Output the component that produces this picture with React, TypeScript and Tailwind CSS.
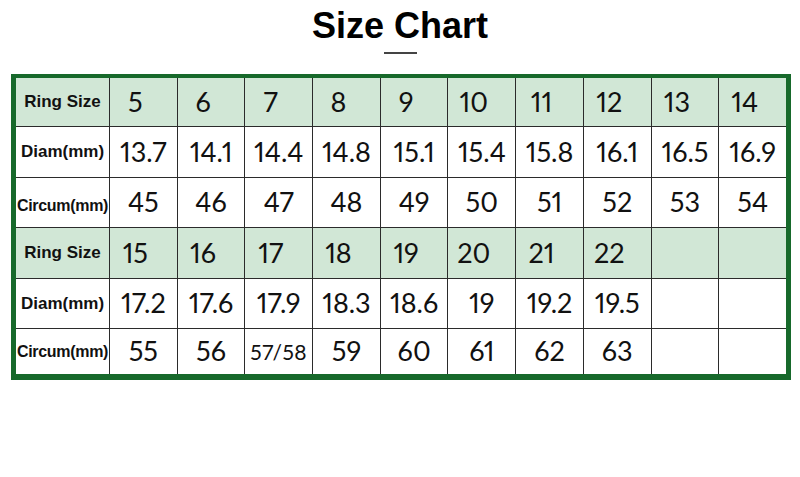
import React from "react";

const rows: { label: string; cells: string[]; head: boolean }[] = [
  { label: "Ring Size", cells: ["5", "6", "7", "8", "9", "10", "11", "12", "13", "14"], head: true },
  { label: "Diam(mm)", cells: ["13.7", "14.1", "14.4", "14.8", "15.1", "15.4", "15.8", "16.1", "16.5", "16.9"], head: false },
  { label: "Circum(mm)", cells: ["45", "46", "47", "48", "49", "50", "51", "52", "53", "54"], head: false },
  { label: "Ring Size", cells: ["15", "16", "17", "18", "19", "20", "21", "22", "", ""], head: true },
  { label: "Diam(mm)", cells: ["17.2", "17.6", "17.9", "18.3", "18.6", "19", "19.2", "19.5", "", ""], head: false },
  { label: "Circum(mm)", cells: ["55", "56", "57/58", "59", "60", "61", "62", "63", "", ""], head: false },
];

export default function App() {
  return (
    <div className="w-[800px] h-[477px] bg-white overflow-hidden" style={{ fontFamily: '"Liberation Sans", Arial, sans-serif' }}>
      <div className="pt-[8px] text-center text-[36px] leading-[36px] font-bold text-black">Size Chart</div>
      <div className="mx-auto mt-[8px] h-[2px] w-[33px] bg-[#444]" />
      <div className="ml-[11px] mt-[20px] w-[780px] border-l-[5px] border-r-[5px] border-t-[4px] border-b-[6px] border-[#17692b]">
        <div className="grid grid-cols-[93px_repeat(10,1fr)] grid-rows-[48px_50px_49px_50px_49px_45px] gap-px bg-[#2b2b2b]">
          {rows.map((r, ri) => (
            <React.Fragment key={ri}>
              <div
                className={`flex items-center justify-center font-bold text-[#111] ${r.head ? "bg-[#d1e7d6]" : "bg-white"} ${r.label === "Circum(mm)" ? "text-[16px] tracking-[-0.3px]" : "text-[17px]"} ${ri === 2 ? "pt-[6px]" : ""}`}
              >
                {r.label}
              </div>
              {r.cells.map((c, ci) => (
                <div
                  key={ci}
                  className={`flex items-center justify-center text-[#111] font-normal proportional-nums ${r.head ? "bg-[#d1e7d6] pr-[16px]" : "bg-white"} ${c.includes("/") ? "text-[21px] tracking-[0.5px]" : "text-[27px]"}`}
                  style={{ fontFamily: 'Lato, "Liberation Sans", sans-serif' }}
                >
                  {c}
                </div>
              ))}
            </React.Fragment>
          ))}
        </div>
      </div>
    </div>
  );
}
